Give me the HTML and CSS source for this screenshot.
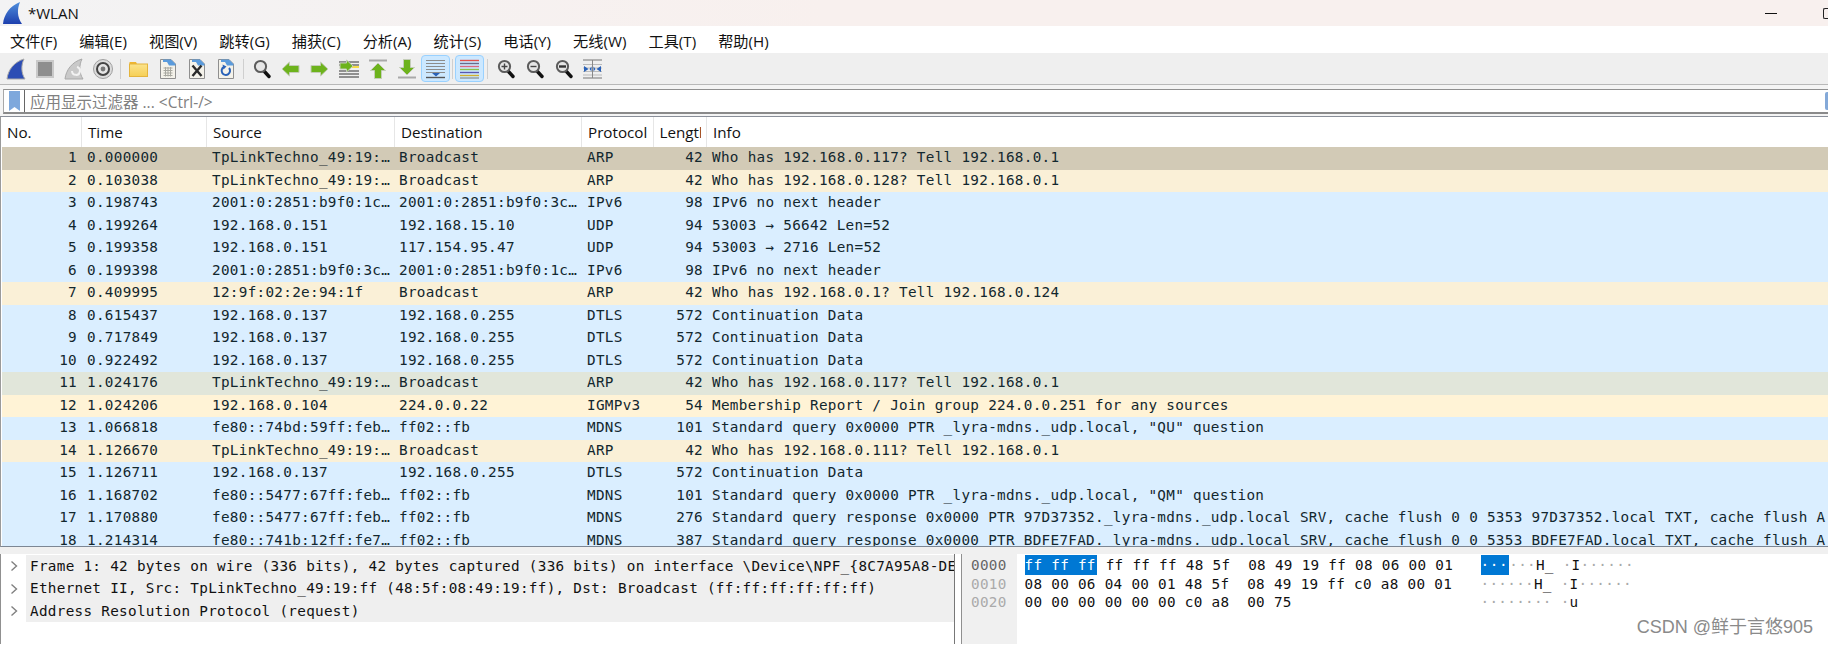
FILE: index.html
```html
<!DOCTYPE html>
<html lang="zh">
<head>
<meta charset="utf-8">
<title>*WLAN</title>
<link rel="stylesheet" href="styles.css">
</head>
<body>
<svg class="defs" width="0" height="0" aria-hidden="true">
  <defs>
    <linearGradient id="fin" x1="0" y1="0" x2="0" y2="1"><stop offset="0" stop-color="#4f8fdc"/><stop offset="1" stop-color="#1d3fae"/></linearGradient>
    <linearGradient id="fold" x1="0" y1="0" x2="0" y2="1"><stop offset="0" stop-color="#fbe38d"/><stop offset="1" stop-color="#f6cf55"/></linearGradient>
    <symbol id="doc" viewBox="0 0 18 22"><path d="M1.5 1.5H12L16.5 6V20.5H1.5Z" fill="#f4f2ea" stroke="#8f8f8f"/><path d="M4 1.5H12L16.5 6V7.5H10L8 4H4Z" fill="#5b9bdc"/></symbol>
    <symbol id="lens" viewBox="0 0 18 20"><path d="M11 12L16 17.5" stroke="#111" stroke-width="3.4" stroke-linecap="round"/><circle cx="7.5" cy="7.5" r="5.6" fill="#e6e6e6" stroke="#5c5c5c" stroke-width="2"/></symbol>
  </defs>
</svg>
<header class="titlebar">
  <svg class="appicon" width="20" height="22" viewBox="0 0 20 22"><path d="M1 22C2 12 8 4 18 0C15 7 15 15 20 22Z" fill="url(#fin)"/></svg>
  <span class="wintitle">*WLAN</span>
  <span class="winmin"></span>
  <span class="winmax"></span>
</header>
<nav class="menubar">
  <span class="menu">文件(F)</span><span class="menu">编辑(E)</span><span class="menu">视图(V)</span><span class="menu">跳转(G)</span><span class="menu">捕获(C)</span><span class="menu">分析(A)</span><span class="menu">统计(S)</span><span class="menu">电话(Y)</span><span class="menu">无线(W)</span><span class="menu">工具(T)</span><span class="menu">帮助(H)</span>
</nav>
<div class="toolbar">
  <span class="tool"><svg width="20" height="22" viewBox="0 0 20 22"><path d="M1 21C2 12 8 4 18 1C15 7 15 15 19 21Z" fill="#2c4db4" stroke="#a9a9a9"/></svg></span>
  <span class="tool"><svg width="18" height="18" viewBox="0 0 18 18"><rect x="1" y="1" width="16" height="16" fill="#8e8e8e" stroke="#c9c9c9" stroke-width="2"/></svg></span>
  <span class="tool"><svg width="20" height="22" viewBox="0 0 20 22"><path d="M1 21C2 12 8 4 18 1C15 7 15 15 19 21Z" fill="#c9c9c9" stroke="#a9a9a9"/><path d="M13 9A4 4 0 1 1 8 13" fill="none" stroke="#f2f2f2" stroke-width="2"/></svg></span>
  <span class="tool"><svg width="20" height="20" viewBox="0 0 20 20"><circle cx="10" cy="10" r="9.5" fill="#dcdcdc" stroke="#a0a0a0"/><circle cx="10" cy="10" r="6" fill="#e4e4e4" stroke="#444" stroke-width="2"/><circle cx="10" cy="10" r="2.4" fill="#777"/></svg></span>
  <span class="sep"></span>
  <span class="tool"><svg width="19" height="16" viewBox="0 0 19 16"><path d="M0.5 3V1H7L8 3Z" fill="#f0b52f"/><rect x="0.5" y="3" width="18" height="12.5" fill="url(#fold)" stroke="#e4b43c"/></svg></span>
  <span class="tool"><svg width="18" height="22" viewBox="0 0 18 22"><use href="#doc"/><path d="M4.5 10H13.5M4.5 12.5H13.5M4.5 15H13.5M4.5 17.5H13.5M6.5 9V18.500M9 9V18.500M11.500 9V18.500" stroke="#a8a8a0" stroke-width="1"/></svg></span>
  <span class="tool"><svg width="18" height="22" viewBox="0 0 18 22"><use href="#doc"/><path d="M4.500 7.500L13.500 18M13.500 7.500L4.500 18" stroke="#2b2b2b" stroke-width="2.400"/></svg></span>
  <span class="tool"><svg width="18" height="22" viewBox="0 0 18 22"><use href="#doc"/><path d="M12 10A4.200 4.200 0 1 1 7 9" fill="none" stroke="#2a62b8" stroke-width="2"/><path d="M5.500 6.500L9.500 8.500L6.500 11.500Z" fill="#2a62b8"/></svg></span>
  <span class="sep"></span>
  <span class="tool"><svg width="18" height="20" viewBox="0 0 18 20"><use href="#lens"/></svg></span>
  <span class="tool"><svg width="19" height="16" viewBox="0 0 19 16"><path d="M1 8L8.500 1V4.500H18V11.500H8.500V15Z" fill="#6db31c" stroke="#c4cdb8"/></svg></span>
  <span class="tool"><svg width="19" height="16" viewBox="0 0 19 16"><path d="M18 8L10.500 1V4.500H1V11.500H10.500V15Z" fill="#6db31c" stroke="#c4cdb8"/></svg></span>
  <span class="tool"><svg width="20" height="20" viewBox="0 0 20 20"><path d="M0 3H20M0 6H20M0 12H20M0 15H20M0 18H20" stroke="#333" stroke-width="1.100"/><path d="M13 7H20V9H13Z" fill="#f5dc4a"/><path d="M14 7L7.500 1V4H1V10H7.500V13Z" fill="#6db31c" stroke="#c4cdb8"/></svg></span>
  <span class="tool"><svg width="18" height="20" viewBox="0 0 18 20"><rect x="0" y="0.500" width="18" height="2" fill="#a9a9a9"/><path d="M9 4L16.500 11.500H12.500V19.500H5.500V11.500H1.500Z" fill="#6db31c" stroke="#c4cdb8"/></svg></span>
  <span class="tool"><svg width="18" height="20" viewBox="0 0 18 20"><rect x="0" y="17.500" width="18" height="2" fill="#a9a9a9"/><path d="M9 16L16.500 8.500H12.500V0.500H5.500V8.500H1.500Z" fill="#6db31c" stroke="#c4cdb8"/></svg></span>
  <span class="tool on"><svg width="19" height="20" viewBox="0 0 19 20"><path d="M0 1.500H19M0 4.500H19M0 7.500H19M0 10.500H19M0 13.500H19" stroke="#8c8c8c"/><path d="M0 18.500H19" stroke="#555" stroke-width="1.400"/><path d="M6 14H14L10 17.500Z" fill="#2a62b8"/></svg></span>
  <span class="sep thin"></span>
  <span class="tool on"><svg width="19" height="20" viewBox="0 0 19 20"><path d="M0 1.500H19" stroke="#e0504a" stroke-width="1.400"/><path d="M0 4.500H19" stroke="#6a6a8a" stroke-width="1.400"/><path d="M0 7.500H19" stroke="#d96a80" stroke-width="1.400"/><path d="M0 10.500H19" stroke="#8ac04a" stroke-width="1.400"/><path d="M0 13.500H19" stroke="#5a58b0" stroke-width="1.400"/><path d="M0 16.500H19" stroke="#d0b030" stroke-width="1.400"/><path d="M0 19H19" stroke="#777"/></svg></span>
  <span class="sep"></span>
  <span class="tool"><svg width="18" height="20" viewBox="0 0 18 20"><use href="#lens"/><path d="M4.500 7.500H10.500M7.500 4.500V10.500" stroke="#444" stroke-width="1.400"/></svg></span>
  <span class="tool"><svg width="18" height="20" viewBox="0 0 18 20"><use href="#lens"/><path d="M4.500 7.500H10.500" stroke="#444" stroke-width="1.400"/></svg></span>
  <span class="tool"><svg width="18" height="20" viewBox="0 0 18 20"><use href="#lens"/><path d="M4 7.500H11" stroke="#333" stroke-width="2.400"/></svg></span>
  <span class="tool"><svg width="19" height="20" viewBox="0 0 19 20"><path d="M0 1H19M0 19H19" stroke="#777" stroke-width="1.200"/><path d="M0 5.500H19M0 9H19M0 12.500H19M0 16H19" stroke="#bbb"/><path d="M9.500 1V19" stroke="#888"/><path d="M1 7L5.500 10L1 13ZM18 7L13.500 10L18 13Z" fill="#2a62b8"/><path d="M6.500 10L8.500 7.500V12.500ZM12.500 10L10.500 7.500V12.500Z" fill="#2a62b8"/></svg></span>
</div>
<div class="filterwrap">
  <div class="filter">
    <span class="bookmark"><svg width="11" height="20" viewBox="0 0 11 20"><path d="M0 0H11V20L5.500 16L0 20Z" fill="#7ea8dc"/></svg></span>
    <span class="placeholder">应用显示过滤器 ... &lt;Ctrl-/&gt;</span>
    <span class="applybtn"></span>
  </div>
</div>
<main class="packets">
  <div class="cols head">
    <span class="hcell">No.</span><span class="hcell">Time</span><span class="hcell">Source</span><span class="hcell">Destination</span><span class="hcell">Protocol</span><span class="hcell"><span class="clip">Length</span></span><span class="hcell">Info</span>
  </div>
  <div class="cols row tan"><span class="no">1</span><span>0.000000</span><span>TpLinkTechno_49:19:…</span><span>Broadcast</span><span>ARP</span><span class="len">42</span><span>Who has 192.168.0.117? Tell 192.168.0.1</span></div>
  <div class="cols row arp"><span class="no">2</span><span>0.103038</span><span>TpLinkTechno_49:19:…</span><span>Broadcast</span><span>ARP</span><span class="len">42</span><span>Who has 192.168.0.128? Tell 192.168.0.1</span></div>
  <div class="cols row udp"><span class="no">3</span><span>0.198743</span><span>2001:0:2851:b9f0:1c…</span><span>2001:0:2851:b9f0:3c…</span><span>IPv6</span><span class="len">98</span><span>IPv6 no next header</span></div>
  <div class="cols row udp"><span class="no">4</span><span>0.199264</span><span>192.168.0.151</span><span>192.168.15.10</span><span>UDP</span><span class="len">94</span><span>53003 → 56642 Len=52</span></div>
  <div class="cols row udp"><span class="no">5</span><span>0.199358</span><span>192.168.0.151</span><span>117.154.95.47</span><span>UDP</span><span class="len">94</span><span>53003 → 2716 Len=52</span></div>
  <div class="cols row udp"><span class="no">6</span><span>0.199398</span><span>2001:0:2851:b9f0:3c…</span><span>2001:0:2851:b9f0:1c…</span><span>IPv6</span><span class="len">98</span><span>IPv6 no next header</span></div>
  <div class="cols row arp"><span class="no">7</span><span>0.409995</span><span>12:9f:02:2e:94:1f</span><span>Broadcast</span><span>ARP</span><span class="len">42</span><span>Who has 192.168.0.1? Tell 192.168.0.124</span></div>
  <div class="cols row udp"><span class="no">8</span><span>0.615437</span><span>192.168.0.137</span><span>192.168.0.255</span><span>DTLS</span><span class="len">572</span><span>Continuation Data</span></div>
  <div class="cols row udp"><span class="no">9</span><span>0.717849</span><span>192.168.0.137</span><span>192.168.0.255</span><span>DTLS</span><span class="len">572</span><span>Continuation Data</span></div>
  <div class="cols row udp"><span class="no">10</span><span>0.922492</span><span>192.168.0.137</span><span>192.168.0.255</span><span>DTLS</span><span class="len">572</span><span>Continuation Data</span></div>
  <div class="cols row sage"><span class="no">11</span><span>1.024176</span><span>TpLinkTechno_49:19:…</span><span>Broadcast</span><span>ARP</span><span class="len">42</span><span>Who has 192.168.0.117? Tell 192.168.0.1</span></div>
  <div class="cols row igmp"><span class="no">12</span><span>1.024206</span><span>192.168.0.104</span><span>224.0.0.22</span><span>IGMPv3</span><span class="len">54</span><span>Membership Report / Join group 224.0.0.251 for any sources</span></div>
  <div class="cols row udp"><span class="no">13</span><span>1.066818</span><span>fe80::74bd:59ff:feb…</span><span>ff02::fb</span><span>MDNS</span><span class="len">101</span><span>Standard query 0x0000 PTR _lyra-mdns._udp.local, "QU" question</span></div>
  <div class="cols row arp"><span class="no">14</span><span>1.126670</span><span>TpLinkTechno_49:19:…</span><span>Broadcast</span><span>ARP</span><span class="len">42</span><span>Who has 192.168.0.111? Tell 192.168.0.1</span></div>
  <div class="cols row udp"><span class="no">15</span><span>1.126711</span><span>192.168.0.137</span><span>192.168.0.255</span><span>DTLS</span><span class="len">572</span><span>Continuation Data</span></div>
  <div class="cols row udp"><span class="no">16</span><span>1.168702</span><span>fe80::5477:67ff:feb…</span><span>ff02::fb</span><span>MDNS</span><span class="len">101</span><span>Standard query 0x0000 PTR _lyra-mdns._udp.local, "QM" question</span></div>
  <div class="cols row udp"><span class="no">17</span><span>1.170880</span><span>fe80::5477:67ff:feb…</span><span>ff02::fb</span><span>MDNS</span><span class="len">276</span><span>Standard query response 0x0000 PTR 97D37352._lyra-mdns._udp.local SRV, cache flush 0 0 5353 97D37352.local TXT, cache flush A</span></div>
  <div class="cols row udp"><span class="no">18</span><span>1.214314</span><span>fe80::741b:12ff:fe7…</span><span>ff02::fb</span><span>MDNS</span><span class="len">387</span><span>Standard query response 0x0000 PTR BDFE7FAD._lyra-mdns._udp.local SRV, cache flush 0 0 5353 BDFE7FAD.local TXT, cache flush A</span></div>
</main>
<section class="lower">
  <div class="tree">
    <div class="node"><svg class="chev" width="8" height="12" viewBox="0 0 8 12"><path d="M1.500 1.500L6.500 6L1.500 10.500" fill="none" stroke="#808080" stroke-width="1.400"/></svg><span class="nodetext">Frame 1: 42 bytes on wire (336 bits), 42 bytes captured (336 bits) on interface \Device\NPF_{8C7A95A8-DE</span></div>
    <div class="node"><svg class="chev" width="8" height="12" viewBox="0 0 8 12"><path d="M1.500 1.500L6.500 6L1.500 10.500" fill="none" stroke="#808080" stroke-width="1.400"/></svg><span class="nodetext">Ethernet II, Src: TpLinkTechno_49:19:ff (48:5f:08:49:19:ff), Dst: Broadcast (ff:ff:ff:ff:ff:ff)</span></div>
    <div class="node"><svg class="chev" width="8" height="12" viewBox="0 0 8 12"><path d="M1.500 1.500L6.500 6L1.500 10.500" fill="none" stroke="#808080" stroke-width="1.400"/></svg><span class="nodetext">Address Resolution Protocol (request)</span></div>
  </div>
  <div class="hexpane">
    <div class="offsets"><span class="cur">0000</span><span>0010</span><span>0020</span></div>
    <div class="hex">
      <div class="hexrow"><span class="sel">ff ff ff</span> ff ff ff 48 5f  08 49 19 ff 08 06 00 01</div>
      <div class="hexrow">08 00 06 04 00 01 48 5f  08 49 19 ff c0 a8 00 01</div>
      <div class="hexrow">00 00 00 00 00 00 c0 a8  00 75</div>
    </div>
    <div class="ascii">
      <div class="hexrow"><span class="sel asel">···</span><span class="dot">···</span>H_ <span class="dot">·</span>I<span class="dot">······</span></div>
      <div class="hexrow"><span class="dot">······</span>H_ <span class="dot">·</span>I<span class="dot">······</span></div>
      <div class="hexrow"><span class="dot">········ ·</span>u</div>
    </div>
    <span class="watermark">CSDN @鲜于言悠905</span>
  </div>
</section>
</body>
</html>
```
FILE: styles.css
```css
* { box-sizing: border-box; }
html, body { margin: 0; height: 645px; overflow: hidden; }
body {
  display: flex;
  flex-direction: column;
  background: #fff;
  color: #111;
  font-family: "Open Sans", "Noto Sans CJK SC", sans-serif;
  font-size: 14.5px;
}
.defs { position: absolute; }

.titlebar {
  height: 26px;
  flex: none;
  display: flex;
  align-items: center;
  background: linear-gradient(90deg, #f3f3f4 0%, #f8f0ee 45%);
}
.appicon { margin-left: 2px; flex: none; }
.wintitle { margin-left: 6px; font-size: 15px; }
.winmin { margin-left: auto; width: 12px; height: 1px; background: #111; }
.winmax { margin-left: 46px; margin-right: -1px; width: 6px; height: 11px; border: 1px solid #222; border-right: 0; border-radius: 2px 0 0 2px; }

.menubar {
  height: 27px;
  flex: none;
  display: flex;
  align-items: center;
  gap: 22px;
  padding-left: 10px;
  background: #fff;
  font-size: 15.2px;
}

.toolbar {
  height: 32px;
  flex: none;
  display: flex;
  align-items: center;
  padding-left: 1px;
  background: #efefef;
  border-bottom: 1px solid #b8b8b8;
}
.tool {
  width: 29px;
  height: 27px;
  flex: none;
  display: flex;
  align-items: center;
  justify-content: center;
}
.tool.on {
  background: #cce8ff;
  border: 1px solid #99d1ff;
  border-radius: 4px;
}
.sep {
  width: 7px;
  height: 20px;
  flex: none;
  background: linear-gradient(#cfcfcf, #cfcfcf) center / 1px 100% no-repeat;
}
.sep.thin { width: 5px; }

.filterwrap {
  height: 31px;
  flex: none;
  padding: 4px 0 2px 3px;
  background: #f4f4f4;
}
.filter {
  height: 25px;
  display: flex;
  align-items: center;
  background: #fff;
  border-top: 1px solid #909090;
  border-bottom: 2px solid #8a8a8a;
  border-left: 1px solid #a8a8a8;
}
.bookmark {
  width: 21px;
  height: 22px;
  flex: none;
  display: flex;
  align-items: center;
  justify-content: center;
  border-right: 1px solid #666;
}
.placeholder { margin-left: 5px; color: #808080; font-size: 15.5px; }
.applybtn { margin-left: auto; width: 3px; height: 18px; background: #84a9d8; border-radius: 2px 0 0 2px; }

.packets {
  height: 431px;
  flex: none;
  overflow: hidden;
  border-top: 1px solid #8a8f99;
  border-left: 1px solid #9a9a9a;
  border-bottom: 1px solid #7d8794;
  font-family: "DejaVu Sans Mono", monospace;
  font-size: 14.3px;
  letter-spacing: 0.3px;
}
.cols {
  display: grid;
  grid-template-columns: 81px 125px 188px 187px 71.5px 53.5px 1fr;
}
.head {
  height: 30px;
  align-items: stretch;
  font-family: "Open Sans", "Noto Sans CJK SC", sans-serif;
  font-size: 15.2px;
  letter-spacing: 0;
  background: #fff;
}
.hcell {
  display: flex;
  align-items: center;
  padding-left: 6px;
  border-right: 1px solid #e6e6e6;
  overflow: hidden;
  white-space: nowrap;
}
.hcell:last-child { border-right: 0; }
.clip { display: block; width: 41px; overflow: hidden; white-space: nowrap; }

.row {
  height: 22.53px;
  line-height: 20px;
  margin-left: 1px;
  white-space: pre;
  color: #12272e;
}
.row > span { padding-left: 5px; overflow: hidden; }
.row > .no { padding: 0 5px 0 0; text-align: right; }
.row > .len { padding: 0 4px 0 0; text-align: right; }
.cols.row { grid-template-columns: 80px 125px 187px 188px 71.5px 53.5px 1fr; }
.tan { background: #d2cab6; }
.arp { background: #faf0d7; }
.udp { background: #daeeff; }
.sage { background: #e1e6da; }
.igmp { background: #fff3d6; }

.lower {
  height: 90px;
  flex: none;
  display: flex;
  margin-top: 7px;
  background: #fff;
  box-shadow: 0 -7px 0 #f0f0f0;
  font-family: "DejaVu Sans Mono", monospace;
  font-size: 14.3px;
  letter-spacing: 0.3px;
}
.tree {
  width: 955px;
  flex: none;
  padding: 1px 0 0 0;
  overflow: hidden;
  border-left: 1px solid #909090;
  border-right: 1px solid #777;
}
.node {
  height: 22.4px;
  display: flex;
  align-items: center;
}
.chev { margin-left: 9px; margin-right: 8px; flex: none; }
.nodetext {
  flex: 1;
  align-self: stretch;
  line-height: 22px;
  padding-left: 4px;
  background: #efefef;
  overflow: hidden;
  white-space: pre;
}

.hexpane {
  flex: 1;
  display: flex;
  position: relative;
  margin-left: 6px;
  border-left: 1px solid #909090;
}
.offsets {
  width: 55px;
  flex: none;
  display: flex;
  flex-direction: column;
  padding: 1px 0 0 9px;
  background: #f0f0f0;
  color: #aaa;
}
.offsets span { height: 18.5px; line-height: 20px; }
.offsets .cur { color: #666; }
.hex { margin-left: 7.5px; width: 456px; flex: none; padding-top: 1px; }
.hexrow { height: 18.5px; line-height: 20px; white-space: pre; }
.sel { display: inline-block; height: 20px; background: #0078d4; color: #fff; padding: 0 1px 0 0; }
.asel { letter-spacing: 0.63px; }
.dot { color: #aaa; }
.ascii { flex: none; padding-top: 1px; }
.watermark {
  position: absolute;
  right: 15px;
  top: 58px;
  font-family: "Liberation Sans", "Noto Sans CJK SC", sans-serif;
  font-size: 18px;
  letter-spacing: 0;
  color: #8a8a8a;
}
```
